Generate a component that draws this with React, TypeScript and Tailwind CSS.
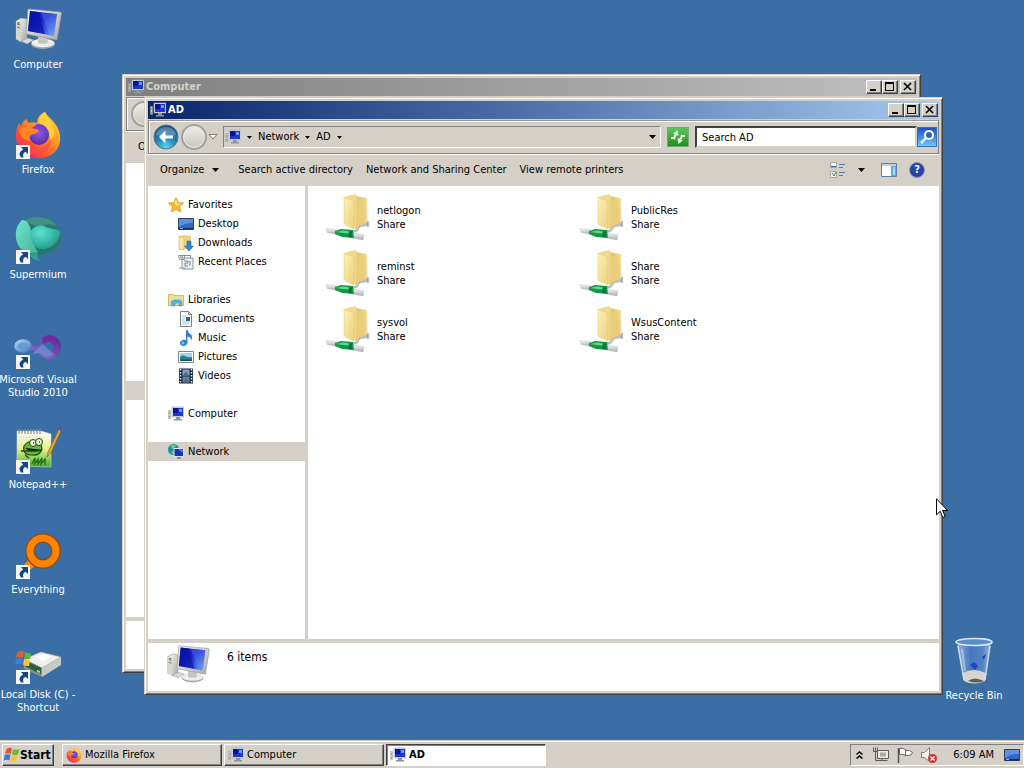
import type { ReactNode } from "react";

type IconProps = { className?: string };

const RAISED =
  "border border-t-white border-l-white border-r-[#404040] border-b-[#404040] bg-[#d4d0c8] shadow-[inset_-1px_-1px_0_#808080]";

/* Shared gradients */
function Gradients() {
  return (
    <svg className="absolute h-0 w-0" aria-hidden="true">
      <defs>
        <linearGradient id="screen" x1="0" y1="0" x2="1" y2="1">
          <stop offset="0" stopColor="#0b12a8" />
          <stop offset="0.45" stopColor="#1a2ad0" />
          <stop offset="1" stopColor="#6fa0f4" />
        </linearGradient>
        <linearGradient id="plastic" x1="0" y1="0" x2="1" y2="1">
          <stop offset="0" stopColor="#f8f8f4" />
          <stop offset="1" stopColor="#a9aaa6" />
        </linearGradient>
        <linearGradient id="fox" x1="1" y1="0" x2="0.1" y2="1">
          <stop offset="0" stopColor="#ffe24a" />
          <stop offset="0.4" stopColor="#ff9a20" />
          <stop offset="0.7" stopColor="#ff5130" />
          <stop offset="1" stopColor="#e8207a" />
        </linearGradient>
        <radialGradient id="foxCore" cx="0.5" cy="0.4" r="0.6">
          <stop offset="0" stopColor="#8a5bea" />
          <stop offset="1" stopColor="#5a2ca8" />
        </radialGradient>
        <linearGradient id="mintLeft" x1="0" y1="0" x2="1" y2="1">
          <stop offset="0" stopColor="#6fe6cf" />
          <stop offset="1" stopColor="#42b596" />
        </linearGradient>
        <radialGradient id="mintCore" cx="0.35" cy="0.3" r="0.8">
          <stop offset="0" stopColor="#5de3d0" />
          <stop offset="1" stopColor="#1c9585" />
        </radialGradient>
        <linearGradient id="folderFront" x1="0" y1="0" x2="1" y2="1">
          <stop offset="0" stopColor="#fbf0b8" />
          <stop offset="1" stopColor="#ecd27a" />
        </linearGradient>
        <linearGradient id="folderBack" x1="0" y1="0" x2="1" y2="0">
          <stop offset="0" stopColor="#d9b859" />
          <stop offset="1" stopColor="#f6e5a4" />
        </linearGradient>
        <linearGradient id="pipe" x1="0" y1="0" x2="0" y2="1">
          <stop offset="0" stopColor="#fafafa" />
          <stop offset="1" stopColor="#a0a6ae" />
        </linearGradient>
        <radialGradient id="backBlue" cx="0.5" cy="0.95" r="0.9">
          <stop offset="0" stopColor="#5fd8f4" />
          <stop offset="0.5" stopColor="#1d86b8" />
          <stop offset="1" stopColor="#1b4f7e" />
        </radialGradient>
        <linearGradient id="infinityLeft" x1="0" y1="0" x2="1" y2="1">
          <stop offset="0" stopColor="#a8cdf0" />
          <stop offset="1" stopColor="#4c7fc4" />
        </linearGradient>
        <linearGradient id="infinityRight" x1="0" y1="1" x2="1" y2="0">
          <stop offset="0" stopColor="#8d84d0" />
          <stop offset="1" stopColor="#56209a" />
        </linearGradient>
        <linearGradient id="grass" x1="0" y1="0" x2="0" y2="1">
          <stop offset="0" stopColor="#ffffff" />
          <stop offset="0.5" stopColor="#e6f08a" />
          <stop offset="1" stopColor="#3fae2c" />
        </linearGradient>
        <linearGradient id="glass" x1="0" y1="0" x2="1" y2="0">
          <stop offset="0" stopColor="#a9c4e6" />
          <stop offset="0.4" stopColor="#4a78c4" />
          <stop offset="0.75" stopColor="#5c88cc" />
          <stop offset="1" stopColor="#b5cdea" />
        </linearGradient>
        <linearGradient id="lens" x1="0" y1="0" x2="0" y2="1">
          <stop offset="0" stopColor="#1f4fc8" />
          <stop offset="1" stopColor="#6ec6fa" />
        </linearGradient>
      </defs>
    </svg>
  );
}

/* Large icons */
function ComputerIcon({ className }: IconProps) {
  return (
    <svg viewBox="0 0 48 48" className={className} aria-hidden="true">
      <path d="M2 15l5-3 6 1v22l-5 1-6-3z" fill="url(#plastic)" stroke="#8f918c" strokeWidth="0.6" />
      <path d="M2 15l5 2v19l-5-3z" fill="#d5d6d0" />
      <path d="M3 18l3 1M3 21l3 1" stroke="#70736d" />
      <circle cx="4.5" cy="17" r="1" fill="#3c9a45" />
      <ellipse cx="29" cy="38" rx="12" ry="5" fill="#a3a6a5" />
      <ellipse cx="29" cy="37" rx="11.5" ry="4.2" fill="#eceee8" />
      <path d="M24 30l9 2 1 5q-5 2-10 0z" fill="#c3c6c4" />
      <path d="M14 3l32 3q1.500 .3 1.300 1.500L43 34 12 28z" fill="url(#plastic)" stroke="#9b9d9b" strokeWidth="0.7" />
      <path d="M16 5l27 3-3 22-26-5z" fill="url(#screen)" />
      <path d="M16 5l9 1 6 22-17-3z" fill="#0710a0" opacity="0.65" />
      <path d="M27 6.500l16 1.500-3 21-5-1z" fill="#8cb8ff" opacity="0.25" />
      <path d="M7 35l7-3 6 2-7 4z" fill="#d8d8d2" stroke="#95968f" strokeWidth="0.5" />
    </svg>
  );
}

function FirefoxIcon({ className }: IconProps) {
  return (
    <svg viewBox="0 0 48 48" className={className} aria-hidden="true">
      <path
        d="M31 1c2 4 8 8 11 13 8 12 4 26-7 31-13 6-28-1-32-13-2-7-1-14 2-20 1 1 1 2 2 3 1-3 3-6 6-7 0 2 1 3 2 4 3-1 5-1 8 0 0-5 3-9 8-11z"
        fill="url(#fox)"
      />
      <path d="M31 1c-5 3-7 8-5 12 6 3 11 8 10 16 3-1 4-4 4-7 1-8-6-13-9-21z" fill="#ffdb3b" opacity="0.8" />
      <circle cx="25" cy="24" r="10" fill="url(#foxCore)" />
      <path d="M5 19c4-4 9-4 13-2l7 2c-1 4-6 4-8 5-2 2-2 4 0 6-6 0-11-4-12-11z" fill="#ff8424" />
      <path d="M21 14c6-3 14 2 14 10-3-5-7-5-9-5-1-3-3-4-5-5z" fill="#7a3fd0" />
      <path d="M4 28c3 8 12 12 20 10 6-1 11-5 13-10 1 8-5 14-14 15-10 1-17-6-19-15z" fill="#ff4260" opacity="0.6" />
    </svg>
  );
}

function SupermiumIcon({ className }: IconProps) {
  return (
    <svg viewBox="0 0 48 48" className={className} aria-hidden="true">
      <ellipse cx="24" cy="20" rx="23" ry="19" fill="#28796b" />
      <path d="M10 5C20-2 38 0 44 12 38 6 28 8 24 12 20 8 14 7 10 5z" fill="#3f9283" />
      <path d="M8 4C0 11 0 24 6 32c6 5 12 6 18 4C18 30 19 15 14 7q-2-3-6-3z" fill="url(#mintLeft)" />
      <path d="M16 18c0-6 10-11 16-7 3 2 10 1 14 4 1 9-8 18-17 18-8 1-13-7-13-15z" fill="url(#mintCore)" />
      <path d="M14 38c4 5 9 6 13 8-4-4-4-6-3-9z" fill="#31a08c" />
    </svg>
  );
}

function VisualStudioIcon({ className }: IconProps) {
  return (
    <svg viewBox="0 0 48 48" className={className} aria-hidden="true">
      <ellipse cx="9" cy="25" rx="7" ry="5" fill="#5f9bd6" stroke="url(#infinityLeft)" strokeWidth="3.500" />
      <path d="M17 33c8-3 8-17 18-18 7 0 12 4 12 11s-5 12-12 12c-9 0-13-12-22-9 4-7 12-4 17 0 3 3 9 3 9-3 0-5-5-6-8-3-6 4-7 10-14 10z" fill="url(#infinityRight)" />
      <path d="M28 17q8-6 15 0l-4 4q-5-3-9 2z" fill="#7729a3" />
      <path d="M19 33l9-10 12 10q-6 5-11 1l-3-2z" fill="#7797d8" opacity="0.65" />
    </svg>
  );
}

function NotepadIcon({ className }: IconProps) {
  return (
    <svg viewBox="0 0 48 48" className={className} aria-hidden="true">
      <path d="M3 5h24l10 3v33L3 40z" fill="url(#grass)" stroke="#cfd5c8" strokeWidth="0.6" />
      <path d="M5 3v5M8 3v5M11 3v5M14 3v5M17 3v5M20 3v5M23 3v5M26 3v5" stroke="#858a85" strokeWidth="1.200" />
      <path d="M4 11h23M4 14h23" stroke="#c8d4dd" strokeWidth="0.600" />
      <path d="M10 20q4-6 10-4 8 1 8 7-2 7-10 6-10 0-8-9z" fill="#63bb38" stroke="#274a19" strokeWidth="1.200" />
      <circle cx="19" cy="17" r="3.500" fill="#e8f7d0" stroke="#223f16" />
      <circle cx="25" cy="16" r="3.500" fill="#e8f7d0" stroke="#223f16" />
      <path d="M19 17h1M25 16h1M7 25h17M12 22q5 5 16 2M11 29l4 3" stroke="#1f4413" strokeWidth="1.400" />
      <path d="M18 38l3-6v6l3-5v5l4-6-1 6 4-5v6" fill="none" stroke="#1b6f18" strokeWidth="1.300" />
      <path d="M45 3L34 26l-1 5 4-4L47 5z" fill="#e0a538" stroke="#7a5a20" strokeWidth="0.6" />
      <path d="M44 3l2-3 2 2-1 3z" fill="#6d4a92" />
    </svg>
  );
}

function EverythingIcon({ className }: IconProps) {
  return (
    <svg viewBox="0 0 48 48" className={className} aria-hidden="true">
      <path d="M5 40l9-11 7 6-7 6z" fill="#ff8200" />
      <circle cx="29" cy="20" r="13" fill="none" stroke="#8b4a12" strokeWidth="9.500" />
      <circle cx="29" cy="20" r="13" fill="none" stroke="#ff8200" strokeWidth="7" />
    </svg>
  );
}

function DiskIcon({ className }: IconProps) {
  return (
    <svg viewBox="0 0 48 48" className={className} aria-hidden="true">
      <path d="M10 23l17-7 20 5-19 11z" fill="#eff0ec" stroke="#999" strokeWidth="0.500" />
      <path d="M10 23l18 9v9l-18-8z" fill="#8b8e8b" />
      <path d="M28 32l19-11v8L28 41z" fill="#c6c9c6" />
      <path d="M12 25l15 7v6l-15-7z" fill="#2c5f3a" />
      <path d="M23 34l3 1v2l-3-1z" fill="#7cff62" />
      <path d="M21 21l9-3 8 2-9 5z" fill="#fff" />
      <path d="M3 17q4-4 7-1l-1 6q-4-2-7 0z" fill="#e55a2a" />
      <path d="M11 16q4 2 6 1l-1 6q-4 1-6-1z" fill="#5cb33c" />
      <path d="M2 23q4-2 7 0l-1 6q-4-2-7 0z" fill="#3b7de0" />
      <path d="M10 23q3 2 6 1l-1 6q-4 0-6-1z" fill="#fbc62f" />
    </svg>
  );
}

function RecycleBinIcon({ className }: IconProps) {
  return (
    <svg viewBox="0 0 48 48" className={className} aria-hidden="true">
      <path d="M7 5h34l-6 39q-11 5-21 0z" fill="url(#glass)" opacity="0.8" />
      <path d="M13 36q10-6 23 0l-1 8q-11 5-21 0z" fill="#d5d5cd" />
      <path d="M18 44q6-5 16 0-7 3-16 0z" fill="#615e58" />
      <path d="M20 28l4-3 4 4-3 4zM32 20l4-3-2 6z" fill="#1c49c0" />
      <path d="M8 9l6 34M40 9l-5 34" stroke="#e2edf8" strokeWidth="1.500" opacity="0.8" />
      <ellipse cx="24" cy="5" rx="18" ry="3.500" fill="#5a8cc8" stroke="#dbe8f5" strokeWidth="1.600" />
      <path d="M12 12l3 22" stroke="#fff" strokeWidth="2" opacity="0.35" />
    </svg>
  );
}

function ShareFolderIcon({ className }: IconProps) {
  return (
    <svg viewBox="0 0 48 48" className={className} aria-hidden="true">
      <path d="M30 2l12 2 1 27-13 4z" fill="url(#folderBack)" />
      <path d="M19 3l11-3 2 2-1 32-11-4z" fill="#efd98c" />
      <path d="M31 5l9 1 1 23-10 4z" fill="#e9cf7c" />
      <path d="M19 3l8 3q2 1 2 4v25l-10-5z" fill="url(#folderFront)" stroke="#ddc16a" strokeWidth="0.5" />
      <path d="M28 36q5 0 6-4l9-4v4l-8 1q-1 5-7 6z" fill="#b8bcc2" />
      <path d="M43 27v6" stroke="#8a8d90" strokeWidth="1.200" />
      <path d="M1 34.500l10 1 1 5-10-2z" fill="url(#pipe)" stroke="#c2c6ca" strokeWidth="0.500" />
      <path d="M27 39l12 2-1 5-11-2z" fill="url(#pipe)" stroke="#b9bdc3" strokeWidth="0.500" />
      <path d="M10 37l6-2 12 1 1 8-12-1-7-3z" fill="#14994a" />
      <path d="M11 38l7-1.500 9 1.500v1.500l-9-.5z" fill="#64db86" />
      <path d="M24 37l3 .5v6l-4-.5z" fill="#0d7537" />
    </svg>
  );
}

function ShortcutArrow() {
  return (
    <svg viewBox="0 0 14 14" className="absolute bottom-0 left-0.5 h-[14px] w-[14px]" aria-hidden="true">
      <path d="M0 0h14v14H0z" fill="#f6f8fa" />
      <path d="M5 2h7v7L9.500 6.800Q6 8.500 7.500 12.500H5Q1 8 7.200 4.500z" fill="#16467f" />
    </svg>
  );
}

/* Small icons */
function MiniComputer({ className = "h-4 w-4 shrink-0" }: IconProps) {
  return (
    <svg viewBox="0 0 16 16" className={className} aria-hidden="true">
      <path d="M.5 4.500h2v8h-2z" fill="#cbcdca" stroke="#9a9c98" strokeWidth="0.5" />
      <path d="M1 7h1M1 11h1" stroke="#5c8a62" />
      <path d="M4 1h12v10H4z" fill="#dde0e6" stroke="#9a9db2" strokeWidth="0.6" />
      <path d="M5 2h10v8H5z" fill="#2038c8" />
      <path d="M5 2h5v5H5z" fill="#0a1496" />
      <path d="M11 3h3v3h-3z" fill="#6f98f2" />
      <path d="M8 11h4v2h2v1.500H6V13h2z" fill="#8d939f" />
    </svg>
  );
}

function MiniFirefox() {
  return <FirefoxIcon className="h-4 w-4 shrink-0" />;
}

function StarIcon() {
  return (
    <svg viewBox="0 0 16 16" className="h-4 w-4 shrink-0" aria-hidden="true">
      <path d="M8 .7l2.200 5 5.300.4-4 3.600 1.300 5.300L8 12.200 3.300 15l1.200-5.300L.5 6.100l5.300-.4z" fill="#fbbd27" stroke="#d98912" strokeWidth="0.8" />
      <path d="M8 2.500l1.500 4 3.500.3-3 2L6 7z" fill="#ffe88a" />
    </svg>
  );
}

function DesktopIcon() {
  return (
    <svg viewBox="0 0 16 16" className="h-4 w-4 shrink-0" aria-hidden="true">
      <path d="M.5 2.500h15v11H.5z" fill="#3167c2" stroke="#31405e" />
      <path d="M1 3h14v4Q7 7 1 11z" fill="#5c91df" />
      <path d="M1 12h14v1.500H1z" fill="#1c2b50" />
      <path d="M2 12h3v1H2z" fill="#58c0ea" />
    </svg>
  );
}

function DownloadsIcon() {
  return (
    <svg viewBox="0 0 16 16" className="h-4 w-4 shrink-0" aria-hidden="true">
      <path d="M1 1l5-1 7 1v13H7l-6 1z" fill="#efd47f" />
      <path d="M1 1l5 2v12l-5-1z" fill="#f7e6a4" stroke="#c9a950" strokeWidth="0.5" />
      <path d="M9 6h4v5h2.500L11 16 6.500 11H9z" fill="#2b83de" stroke="#1b5da8" strokeWidth="0.5" />
    </svg>
  );
}

function RecentIcon() {
  return (
    <svg viewBox="0 0 16 16" className="h-4 w-4 shrink-0" aria-hidden="true">
      <path d="M.5 1.500h6v4h-5zM4 4h11v11H4z" fill="#eef1f3" stroke="#8b969d" />
      <path d="M4.500 1.500h8v3M6 7h4v2H7v3h3M2 3h3M12 7v4h-1" fill="none" stroke="#7a8890" />
      <path d="M1 14h6" stroke="#a6afb4" strokeWidth="1.500" />
    </svg>
  );
}

function LibrariesIcon() {
  return (
    <svg viewBox="0 0 16 16" className="h-4 w-4 shrink-0" aria-hidden="true">
      <path d="M.5 2.500h5l1 1h9v10H.5z" fill="#f3dc8a" stroke="#c9ac55" strokeWidth="0.8" />
      <path d="M2 5h12v4H2z" fill="#cde9ba" />
      <path d="M3.500 14V9.500L6 8h6l2 1.500V14h-3v-3H7v3z" fill="#5cb4d8" stroke="#3a88ad" strokeWidth="0.5" />
    </svg>
  );
}

function DocumentIcon() {
  return (
    <svg viewBox="0 0 16 16" className="h-4 w-4 shrink-0" aria-hidden="true">
      <path d="M2.500.5h8l3 3v12h-11z" fill="#fbfcfd" stroke="#77818a" />
      <path d="M10.500.5v3h3" fill="none" stroke="#77818a" />
      <path d="M4 5h4M4 7h3M4 9h3M4 11h8M4 13h7" stroke="#b4c3d2" />
      <path d="M8 6h4v4H8z" fill="#2b5ea3" />
    </svg>
  );
}

function MusicIcon() {
  return (
    <svg viewBox="0 0 16 16" className="h-4 w-4 shrink-0" aria-hidden="true">
      <path d="M8 0h1.500q.5 3 4 5 1.500 3-.5 6 .5-4-3.500-4.500V12q-.5 4-4 4Q2 15.500 2 13t3-3q2-.5 3 .5z" fill="#2b80d6" />
      <circle cx="5" cy="13" r="1.500" fill="#7cc2f7" />
    </svg>
  );
}

function PicturesIcon() {
  return (
    <svg viewBox="0 0 16 16" className="h-4 w-4 shrink-0" aria-hidden="true">
      <path d="M.5 2.500h15v11H.5z" fill="#fff" stroke="#7e8890" />
      <path d="M2 4h12v8H2z" fill="#9bd7ee" />
      <path d="M2 8q3-3 5-1 3 2 7 1v4H2z" fill="#2d7c8e" />
      <path d="M2 10.500h12V12H2z" fill="#175063" />
    </svg>
  );
}

function VideosIcon() {
  return (
    <svg viewBox="0 0 16 16" className="h-4 w-4 shrink-0" aria-hidden="true">
      <path d="M1 .5h14v15H1z" fill="#20262c" />
      <path d="M4.500 1.500h7v6h-7z" fill="#6ea6de" />
      <path d="M4.500 8.500h7v6h-7z" fill="#4a86c2" />
      <path d="M6 6l2-2.500L10 6v1.500H6zM6 13l2-2.500 2 2.500v1.500H6z" fill="#7c5c50" />
      <path d="M2.500 1v14M13.500 1v14" stroke="#e9edf0" strokeWidth="1.500" strokeDasharray="1.500 1.500" />
    </svg>
  );
}

function NetworkIcon() {
  return (
    <svg viewBox="0 0 16 16" className="h-4 w-4 shrink-0" aria-hidden="true">
      <circle cx="5.500" cy="5.500" r="5.500" fill="#1f8fa8" />
      <path d="M2 2q4-3 6 0L5 5zM3 7l4 1-2 3z" fill="#5fd07b" />
      <path d="M6 4.500h9.500v8H6z" fill="#1c2fc0" stroke="#dfe3ee" />
      <path d="M10.500 5.500h4v3z" fill="#6f90f0" />
      <path d="M9 13h4v2H9z" fill="#8a90a4" />
    </svg>
  );
}

function FlagLogo() {
  return (
    <svg viewBox="0 0 16 16" className="h-4 w-4 shrink-0" aria-hidden="true">
      <path d="M2.500 2q3-2 5.500-.5L6.800 7Q4 5.500 1 7z" fill="#e5542a" />
      <path d="M9 2q3 1.500 6.500 0L14 7.500q-3 1.500-6 0z" fill="#6cb83a" />
      <path d="M.8 8q3-1.500 5.700 0L5.200 13.500Q3 12-.2 13.500z" fill="#3478d8" />
      <path d="M7.700 8.500q3 1.500 6 0l-1.500 5.300q-3 1.700-6 .2z" fill="#f8c22c" />
    </svg>
  );
}

function Caret({ className = "h-1 w-[7px]" }: IconProps) {
  return (
    <svg viewBox="0 0 7 4" className={className} aria-hidden="true">
      <path d="M0 0h7L3.500 4z" fill="#000" />
    </svg>
  );
}

/* Window chrome */
function CaptionButtons() {
  return (
    <div className="flex h-[14px]">
      <button aria-label="Minimize" className={`h-[14px] w-4 ${RAISED}`}>
        <svg viewBox="0 0 14 12" className="h-3 w-[14px]"><path d="M3 8h6v2H3z" /></svg>
      </button>
      <button aria-label="Maximize" className={`h-[14px] w-4 ${RAISED}`}>
        <svg viewBox="0 0 14 12" className="h-3 w-[14px]"><path fillRule="evenodd" d="M2 1h9v9H2zm1 2v6h7V3z" /></svg>
      </button>
      <button aria-label="Close" className={`ml-0.5 h-[14px] w-4 ${RAISED}`}>
        <svg viewBox="0 0 14 12" className="h-3 w-[14px]"><path d="M3 2l7 7M10 2l-7 7" stroke="#000" strokeWidth="1.600" /></svg>
      </button>
    </div>
  );
}

type WindowProps = {
  title: string;
  active?: boolean;
  className: string;
  children: ReactNode;
};

function DesktopWindow({ title, active = false, className, children }: WindowProps) {
  return (
    <section
      aria-label={title}
      className={`absolute flex flex-col border border-t-[#d4d0c8] border-l-[#d4d0c8] border-r-[#404040] border-b-[#404040] bg-[#d4d0c8] p-[3px] shadow-[inset_1px_1px_0_#fff,inset_-1px_-1px_0_#808080] ${className}`}
    >
      <header
        className={`flex h-[18px] shrink-0 items-center bg-linear-to-r pl-0.5 pr-px ${
          active ? "from-[#0a246a] to-[#a6caf0] text-white" : "from-[#808080] to-[#c0c0c0] text-[#d4d0c8]"
        }`}
      >
        <MiniComputer />
        <h2 className="ml-0.5 flex-1 font-bold">{title}</h2>
        <CaptionButtons />
      </header>
      {children}
    </section>
  );
}

function ForwardButton({ label }: { label: string }) {
  return (
    <button
      aria-label={label}
      className="h-[26px] w-[26px] shrink-0 rounded-full border-2 border-[#a3a19b] bg-linear-to-b from-[#efede9] to-[#c9c6bf] shadow-[inset_0_0_0_1px_#e9e7e2]"
    />
  );
}

function Toolbar() {
  return (
    <div className="mt-px flex h-[34px] shrink-0 items-center border border-[#808080] border-t-[#9c9a94] pl-1 pr-px shadow-[inset_1px_1px_0_#fff,0_1px_0_#fff]">
      <button aria-label="Back" className="h-[26px] w-[26px] shrink-0">
        <svg viewBox="0 0 26 26" className="h-[26px] w-[26px]">
          <circle cx="13" cy="13" r="12" fill="url(#backBlue)" stroke="#58717f" />
          <path d="M3 11q2-8 10-8t10 8q-10 3-20 0z" fill="#fff" opacity="0.25" />
          <path d="M12.500 6.500L6 13l6.500 6.500v-5H20v-3h-7.500z" fill="#fff" />
        </svg>
      </button>
      <span className="ml-0.5 flex"><ForwardButton label="Forward" /></span>
      <button aria-label="Recent locations" className="mx-px w-2.5 shrink-0">
        <svg viewBox="0 0 10 6" className="h-1.5 w-2.5">
          <path d="M1 .5h8L5 5z" fill="#f6f5f1" stroke="#807e78" />
        </svg>
      </button>
      <div className="ml-1 flex h-[22px] flex-1 items-center border border-t-[#808080] border-l-[#808080] border-r-white border-b-white pl-px pr-1">
        <MiniComputer />
        <button aria-label="Locations" className="ml-1.5 mr-1.5"><Caret className="h-[3px] w-[5px]" /></button>
        <button>Network</button>
        <button aria-label="Network locations" className="mx-1.5"><Caret className="h-[3px] w-[5px]" /></button>
        <button>AD</button>
        <button aria-label="AD locations" className="ml-1.5"><Caret className="h-[3px] w-[5px]" /></button>
        <span className="flex-1" />
        <button aria-label="Previous locations"><Caret /></button>
      </div>
      <button aria-label="Refresh" className="ml-1.5 h-5 w-[22px] shrink-0 border border-[#77a873] bg-linear-to-b from-[#62c35d] to-[#159421]">
        <svg viewBox="0 0 20 18" className="h-[18px] w-5">
          <path d="M7 12q-3-3 0-6h-2l4.500-4 1 6-1.500-1q-2 2-2 5z" fill="#e9ffe0" />
          <path d="M13 6q3 3 0 6h2l-4.500 4-1-6 1.500 1q2-2 2-5z" fill="#e9ffe0" />
          <path d="M3 9h3v2H3zM14 7h3v2h-3z" fill="#e9ffe0" />
        </svg>
      </button>
      <input
        type="search"
        aria-label="Search AD"
        placeholder="Search AD"
        className="ml-1.5 h-[22px] w-[222px] border-2 border-t-[#404040] border-l-[#404040] border-r-[#d4d0c8] border-b-[#d4d0c8] bg-white px-[5px] outline-none placeholder:text-black"
      />
      <button aria-label="Search" className="h-5 w-5 shrink-0 border border-[#3d6db4]">
        <svg viewBox="0 0 18 18" className="h-[18px] w-[18px]">
          <path d="M0 0h18v18H0z" fill="url(#lens)" />
          <path d="M3 15l5-5" stroke="#dcecff" strokeWidth="2.500" />
          <circle cx="11" cy="7" r="4" fill="#2a61cf" stroke="#fff" strokeWidth="2" />
        </svg>
      </button>
    </div>
  );
}

function CommandBar() {
  return (
    <div className="flex h-8 shrink-0 items-center gap-[13px] pl-3 pr-[14px]">
      <button className="mr-1.5 flex items-center gap-2">
        Organize <Caret />
      </button>
      <button>Search active directory</button>
      <button>Network and Sharing Center</button>
      <button>View remote printers</button>
      <div className="ml-auto flex items-center">
        <button aria-label="Change view">
          <svg viewBox="0 0 16 16" className="h-4 w-4">
            <path d="M.5.500h6v5h-6zM.5 9.500h6v6h-6z" fill="#fff" stroke="#a2a5a8" />
            <path d="M1 4h5v1H1z" fill="#3c63a8" />
            <path d="M2 11l2 3 2-4" fill="none" stroke="#3f7e3a" />
            <path d="M9 2.500h6M9 5.500h4M9 10.500h6M9 13.500h4" stroke="#5b78ab" />
          </svg>
        </button>
        <button aria-label="More views" className="ml-3"><Caret /></button>
        <button aria-label="Preview pane" className="ml-4">
          <svg viewBox="0 0 16 14" className="h-[14px] w-4">
            <path d="M.5.500h15v13H.5z" fill="#fff" stroke="#5c7fa8" />
            <path d="M1 1h14v2H1z" fill="#bcd0e6" />
            <path d="M10 3h5v10h-5z" fill="#4fb0de" />
            <path d="M12 4h2v8h-2z" fill="#9bdcf6" />
          </svg>
        </button>
        <button aria-label="Help" className="ml-3 flex h-4 w-4 items-center justify-center rounded-full border border-[#8f98b4] bg-[#2444ac] font-bold text-white">
          ?
        </button>
      </div>
    </div>
  );
}

const NAV_GROUPS = [
  {
    label: "Favorites",
    icon: <StarIcon />,
    items: [
      { label: "Desktop", icon: <DesktopIcon /> },
      { label: "Downloads", icon: <DownloadsIcon /> },
      { label: "Recent Places", icon: <RecentIcon /> },
    ],
  },
  {
    label: "Libraries",
    icon: <LibrariesIcon />,
    items: [
      { label: "Documents", icon: <DocumentIcon /> },
      { label: "Music", icon: <MusicIcon /> },
      { label: "Pictures", icon: <PicturesIcon /> },
      { label: "Videos", icon: <VideosIcon /> },
    ],
  },
  { label: "Computer", icon: <MiniComputer />, items: [] },
  { label: "Network", icon: <NetworkIcon />, items: [] },
];

function NavPane({ selected }: { selected: string }) {
  return (
    <nav className="flex w-[157px] shrink-0 flex-col gap-[19px] bg-white pt-[9px]">
      {NAV_GROUPS.map((group) => (
        <div key={group.label}>
          <a
            href="#"
            className={`flex h-[19px] items-center gap-1 pl-5 ${group.label === selected ? "bg-[#d4d0c8]" : ""}`}
          >
            {group.icon}
            {group.label}
          </a>
          {group.items.map((item) => (
            <a key={item.label} href="#" className="flex h-[19px] items-center gap-1 pl-[30px]">
              {item.icon}
              {item.label}
            </a>
          ))}
        </div>
      ))}
    </nav>
  );
}

const SHARES = ["netlogon", "PublicRes", "reminst", "Share", "sysvol", "WsusContent"];

function ShareList() {
  return (
    <ul className="grid flex-1 auto-rows-[56px] grid-cols-[254px_254px] content-start bg-white pl-[17px] pt-1">
      {SHARES.map((name) => (
        <li key={name} className="flex items-center gap-1">
          <ShareFolderIcon className="h-12 w-12 shrink-0" />
          <span className="leading-[14px]">
            {name}
            <br />
            Share
          </span>
        </li>
      ))}
    </ul>
  );
}

/* Desktop */
const SHORTCUTS = [
  { label: "Computer", Icon: ComputerIcon, shortcut: false },
  { label: "Firefox", Icon: FirefoxIcon, shortcut: true },
  { label: "Supermium", Icon: SupermiumIcon, shortcut: true },
  { label: "Microsoft Visual\nStudio 2010", Icon: VisualStudioIcon, shortcut: true },
  { label: "Notepad++", Icon: NotepadIcon, shortcut: true },
  { label: "Everything", Icon: EverythingIcon, shortcut: true },
  { label: "Local Disk (C) -\nShortcut", Icon: DiskIcon, shortcut: true },
];

function DesktopShortcut({ label, Icon, shortcut }: (typeof SHORTCUTS)[number]) {
  return (
    <button className="flex h-[105px] w-[76px] flex-col items-center text-white">
      <span className="relative mt-1.5 block h-12 w-12 shrink-0">
        <Icon className="h-12 w-12" />
        {shortcut && <ShortcutArrow />}
      </span>
      <span className="mt-1 whitespace-pre leading-[13px]">{label}</span>
    </button>
  );
}

const TASKS = [
  { label: "Mozilla Firefox", icon: <MiniFirefox />, active: false },
  { label: "Computer", icon: <MiniComputer />, active: false },
  { label: "AD", icon: <MiniComputer />, active: true },
];

function Taskbar() {
  return (
    <footer className="flex h-7 shrink-0 items-center bg-[#d4d0c8] pl-0.5 pt-0.5 shadow-[inset_0_1px_0_#d4d0c8,inset_0_2px_0_#fff]">
      <button className={`flex h-[22px] w-[52px] items-center pl-px text-xs font-bold ${RAISED}`}>
        <FlagLogo />
        Start
      </button>
      <div className="ml-2 flex flex-1 gap-0.5">
        {TASKS.map((task) => (
          <button
            key={task.label}
            className={`flex h-[22px] w-40 items-center gap-[3px] px-[3px] ${
              task.active
                ? "border border-t-[#404040] border-l-[#404040] border-r-white border-b-white bg-white font-bold shadow-[inset_1px_1px_0_#808080]"
                : RAISED
            }`}
          >
            {task.icon}
            {task.label}
          </button>
        ))}
      </div>
      <div className="flex h-[22px] items-center border border-t-[#808080] border-l-[#808080] border-r-white border-b-white pl-[5px] pr-[3px]">
        <button aria-label="Show hidden icons">
          <svg viewBox="0 0 7 8" className="h-2 w-[7px]">
            <path d="M.5 3.500l3-2.500 3 2.500M.5 7.500l3-2.500 3 2.500" fill="none" stroke="#000" strokeWidth="1.500" />
          </svg>
        </button>
        <button aria-label="Network status" className="ml-2.5">
          <svg viewBox="0 0 16 16" className="h-4 w-4">
            <path d="M4.500 3.500h11v8h-11z" fill="#ece9e2" stroke="#5b5b58" />
            <path d="M7 5.500h6v4H7z" fill="#aaa8a3" />
            <path d="M.5.500v4h4v-4M2.500.500v13h12M9 12v2" fill="none" stroke="#5b5b58" />
          </svg>
        </button>
        <button aria-label="Action center" className="ml-2">
          <svg viewBox="0 0 16 16" className="h-4 w-4">
            <path d="M1.500 1v15" stroke="#55534f" strokeWidth="1.500" />
            <path d="M2.500 1.500q3-1 6 1v6q-3-2-6-1zM8.500 3.500h4l3 2q-1 3-4 3h-3z" fill="#faf9f5" stroke="#66645f" />
          </svg>
        </button>
        <button aria-label="Volume" className="ml-2">
          <svg viewBox="0 0 16 16" className="h-4 w-4">
            <path d="M.5 5.500h3L8.500.500v14l-5-4h-3z" fill="#f5f3ef" stroke="#807d77" />
            <circle cx="11.500" cy="11.500" r="4.500" fill="#cf3434" />
            <path d="M9.500 9.500l4 4M13.500 9.500l-4 4" stroke="#fff" strokeWidth="1.300" />
          </svg>
        </button>
        <time className="ml-4">6:09 AM</time>
        <button aria-label="Show desktop" className="ml-2.5"><DesktopIcon /></button>
      </div>
    </footer>
  );
}

export default function App() {
  return (
    <div className="flex h-screen select-none flex-col overflow-hidden bg-[#3a6ea5] font-['DejaVu_Sans_Condensed','DejaVu_Sans',sans-serif] text-[11px] leading-[14px] text-black">
      <Gradients />
      <main className="relative min-h-0 flex-1">
        <div className="flex w-[76px] flex-col">
          {SHORTCUTS.map((item) => (
            <DesktopShortcut key={item.label} {...item} />
          ))}
        </div>

        <button className="absolute bottom-[38px] right-3 flex w-[76px] flex-col items-center gap-1 text-white">
          <RecycleBinIcon className="h-12 w-12" />
          <span className="leading-[13px]">Recycle Bin</span>
        </button>

        <DesktopWindow title="Computer" className="bottom-[67px] left-[122px] right-[103px] top-[74px]">
          <div className="mt-px flex h-[34px] shrink-0 items-center border border-[#808080] pl-1 shadow-[inset_1px_1px_0_#fff,0_1px_0_#fff]">
            <ForwardButton label="Back" />
          </div>
          <div className="flex h-8 shrink-0 items-center pl-3">Organize</div>
          <div className="flex-1 bg-white pt-[218px]">
            <div className="h-[19px] w-[157px] bg-[#d4d0c8]" />
          </div>
          <div className="mt-1 h-12 shrink-0 bg-white" />
        </DesktopWindow>

        <DesktopWindow title="AD" active className="bottom-[45px] left-[144px] right-[81px] top-[97px]">
          <Toolbar />
          <CommandBar />
          <div className="flex min-h-0 flex-1 gap-[3px]">
            <NavPane selected="Network" />
            <ShareList />
          </div>
          <div className="mt-1 flex h-12 shrink-0 items-start bg-white pl-[18px]">
            <ComputerIcon className="h-11 w-11" />
            <p className="ml-[17px] mt-1.5 text-xs">6 items</p>
          </div>
        </DesktopWindow>

        {/* Pointer */}
        <svg viewBox="0 0 12 21" className="absolute left-[936px] top-[498px] h-[21px] w-3" aria-hidden="true">
          <path d="M.5.800v16l3.700-3.500 2.600 6.200 2.400-1-2.600-6h5z" fill="#fff" stroke="#000" />
        </svg>
      </main>
      <Taskbar />
    </div>
  );
}
